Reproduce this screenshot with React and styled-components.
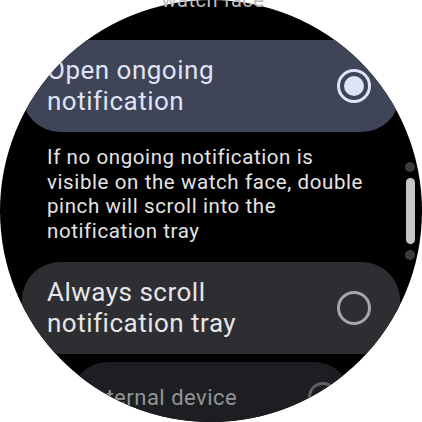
import React from 'react';
import styled, { createGlobalStyle, css } from 'styled-components';

const GlobalStyle = createGlobalStyle`
  html, body {
    margin: 0;
    padding: 0;
    background: #ffffff;
  }
  body {
    font-family: Roboto, "Noto Sans", sans-serif;
  }
`;

const Screen = styled.div`
  position: relative;
  width: 422px;
  height: 422px;
  overflow: hidden;
`;

const Dial = styled.div`
  width: 422px;
  height: 422px;
  border-radius: 50%;
  background: #000;
  overflow: hidden;
`;

const List = styled.div`
  display: flex;
  flex-direction: column;
  padding-top: 40px;
`;

const tones = {
  active: css`
    background: #3f4456;
    color: #dfe3f7;
  `,
  idle: css`
    background: #2d2e32;
    color: #e6e6e8;
  `,
  faded: css`
    background: #1d1e21;
    color: #939498;
  `,
};

const Card = styled.div`
  display: flex;
  align-items: center;
  justify-content: space-between;
  box-sizing: border-box;
  height: ${({ $faded }) => ($faded ? '70px' : '92px')};
  margin: 0 ${({ $faded }) => ($faded ? '72px' : '22px')};
  margin-top: ${({ $gap }) => $gap || 0}px;
  padding: ${({ $faded }) => ($faded ? '0 12px 0 10px' : '0 29px 0 25px')};
  border-radius: 38px;
  ${({ $tone }) => tones[$tone]}
`;

const Title = styled.div`
  font-size: ${({ $small }) => ($small ? '22px' : '26px')};
  line-height: 31px;
  letter-spacing: 0.5px;
`;

const Radio = styled.span`
  flex: none;
  box-sizing: border-box;
  width: ${({ $small }) => ($small ? '30px' : '34px')};
  height: ${({ $small }) => ($small ? '30px' : '34px')};
  border-radius: 50%;
  display: flex;
  align-items: center;
  justify-content: center;
  border: ${({ $checked }) => ($checked ? '3px solid #dfe3fa' : '3px solid #a6a6aa')};
  ${({ $small }) => $small && css`border-color: #5e5f63;`}

  &::after {
    content: '';
    display: ${({ $checked }) => ($checked ? 'block' : 'none')};
    width: 20px;
    height: 20px;
    border-radius: 50%;
    background: #dfe3fa;
  }
`;

const Hint = styled.p`
  margin: 13px 0 0;
  padding: 0 52px 0 47px;
  font-size: 20.5px;
  line-height: 24.5px;
  letter-spacing: 0.6px;
  color: #e3e3e3;
`;

const Caption = styled.div`
  position: absolute;
  top: -12px;
  left: 0;
  right: 0;
  text-align: center;
  font-size: 20px;
  letter-spacing: 0.5px;
  color: #bdbdbd;
  padding-left: 4px;
`;

const Scroll = styled.div`
  position: absolute;
  right: 7px;
  top: 162px;
  display: flex;
  flex-direction: column;
  align-items: center;
  gap: 6px;
`;

const Dot = styled.span`
  width: 10px;
  height: 10px;
  border-radius: 50%;
  background: #3b3b3d;
`;

const Thumb = styled.span`
  width: 9px;
  height: 66px;
  border-radius: 5px;
  background: #c6c6c6;
`;

const Option = ({ label, checked, tone, gap, faded }) => (
  <Card $tone={tone} $gap={gap} $faded={faded}>
    <Title $small={faded}>{label}</Title>
    <Radio $checked={checked} $small={faded} />
  </Card>
);

export default function App() {
  return (
    <>
      <GlobalStyle />
      <Screen>
        <Dial>
          <List>
            <Option
              tone="active"
              checked
              label={<>Open ongoing<br />notification</>}
            />
            <Hint>
              If no ongoing notification is visible on the watch face, double
              pinch will scroll into the notification tray
            </Hint>
            <Option
              tone="idle"
              gap={19}
              label={<>Always scroll<br />notification tray</>}
            />
            <Option tone="faded" gap={8} faded label="External device" />
          </List>
        </Dial>
        <Caption>watch face</Caption>
        <Scroll>
          <Dot />
          <Thumb />
          <Dot />
        </Scroll>
      </Screen>
    </>
  );
}
